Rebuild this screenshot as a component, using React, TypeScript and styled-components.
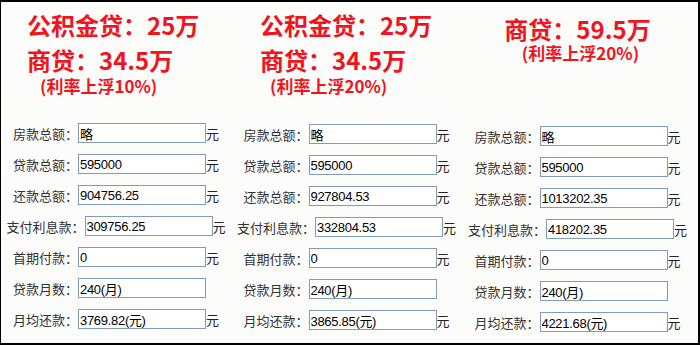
import styled, { createGlobalStyle } from 'styled-components';

const GlobalStyle = createGlobalStyle`
  html, body {
    margin: 0;
    padding: 0;
    background: #ffffff;
  }
`;

const Frame = styled.div`
  width: 700px;
  height: 345px;
  box-sizing: border-box;
  border-style: solid;
  border-color: #000;
  border-width: 2px 2px 2px 1px;
  background: #fcfcfa;
  display: grid;
  grid-template-columns: 230px 231px 231px;
  font-family: "Noto Sans CJK SC", "Noto Sans", sans-serif;
  overflow: hidden;
`;

const Column = styled.div`
  display: flex;
  flex-direction: column;
`;

const Header = styled.div<{ $height: number; $padTop: number; $indent: number; $center?: boolean }>`
  box-sizing: border-box;
  height: ${({ $height }) => $height}px;
  padding-top: ${({ $padTop }) => $padTop}px;
  padding-left: ${({ $indent }) => $indent}px;
  text-align: ${({ $center }) => ($center ? 'center' : 'left')};
  color: #f0141e;
  font-weight: 700;
`;

const Title = styled.div<{ $lh?: number }>`
  font-size: 24px;
  line-height: ${({ $lh }) => $lh ?? 35}px;
  white-space: nowrap;
`;

const Note = styled.div<{ $indent?: number }>`
  font-size: 17px;
  line-height: 20px;
  margin-top: -1px;
  padding-left: ${({ $indent }) => $indent ?? 0}px;
  white-space: nowrap;
`;

const Rows = styled.div`
  display: flex;
  flex-direction: column;
  gap: 11px;
`;

const Row = styled.div`
  display: flex;
  justify-content: center;
  align-items: center;
  height: 20px;
`;

const Label = styled.span`
  font-size: 13px;
  color: #333;
  white-space: nowrap;
`;

const Field = styled.input`
  width: 128px;
  height: 20px;
  box-sizing: border-box;
  margin: 0;
  padding: 0 1px;
  border: 1px solid #7f9db9;
  background: #fff;
  color: #000;
  font-family: "Liberation Sans", "Noto Sans CJK SC", sans-serif;
  font-size: 13px;
  letter-spacing: -0.3px;
  outline: none;
`;

const Unit = styled.span<{ $hidden?: boolean }>`
  width: 13px;
  font-size: 13px;
  color: #222;
  visibility: ${({ $hidden }) => ($hidden ? 'hidden' : 'visible')};
`;

type Plan = {
  header: { height: number; padTop: number; indent: number; center?: boolean; titleLh?: number };
  titles: string[];
  note: string;
  noteIndent: number;
  values: string[];
};

const labels = ['房款总额：', '贷款总额：', '还款总额：', '支付利息款：', '首期付款：', '贷款月数：', '月均还款：'];

const plans: Plan[] = [
  {
    header: { height: 121, padTop: 5, indent: 26 },
    titles: ['公积金贷：25万', '商贷：34.5万'],
    note: '(利率上浮10%)',
    noteIndent: 13,
    values: ['略', '595000', '904756.25', '309756.25', '0', '240(月)', '3769.82(元)'],
  },
  {
    header: { height: 122, padTop: 5, indent: 29 },
    titles: ['公积金贷：25万', '商贷：34.5万'],
    note: '(利率上浮20%)',
    noteIndent: 10,
    values: ['略', '595000', '927804.53', '332804.53', '0', '240(月)', '3865.85(元)'],
  },
  {
    header: { height: 124, padTop: 12, indent: 0, center: true, titleLh: 30 },
    titles: ['商贷：59.5万'],
    note: '(利率上浮20%)',
    noteIndent: 6,
    values: ['略', '595000', '1013202.35', '418202.35', '0', '240(月)', '4221.68(元)'],
  },
];

export default function App() {
  return (
    <>
      <GlobalStyle />
      <Frame>
        {plans.map((plan, i) => (
          <Column key={i}>
            <Header
              $height={plan.header.height}
              $padTop={plan.header.padTop}
              $indent={plan.header.indent}
              $center={plan.header.center}
            >
              {plan.titles.map((t) => (
                <Title key={t} $lh={plan.header.titleLh}>
                  {t}
                </Title>
              ))}
              <Note $indent={plan.noteIndent}>{plan.note}</Note>
            </Header>
            <Rows>
              {labels.map((label, j) => (
                <Row key={label}>
                  <Label>{label}</Label>
                  <Field type="text" value={plan.values[j]} readOnly />
                  <Unit $hidden={j === 5}>元</Unit>
                </Row>
              ))}
            </Rows>
          </Column>
        ))}
      </Frame>
    </>
  );
}
